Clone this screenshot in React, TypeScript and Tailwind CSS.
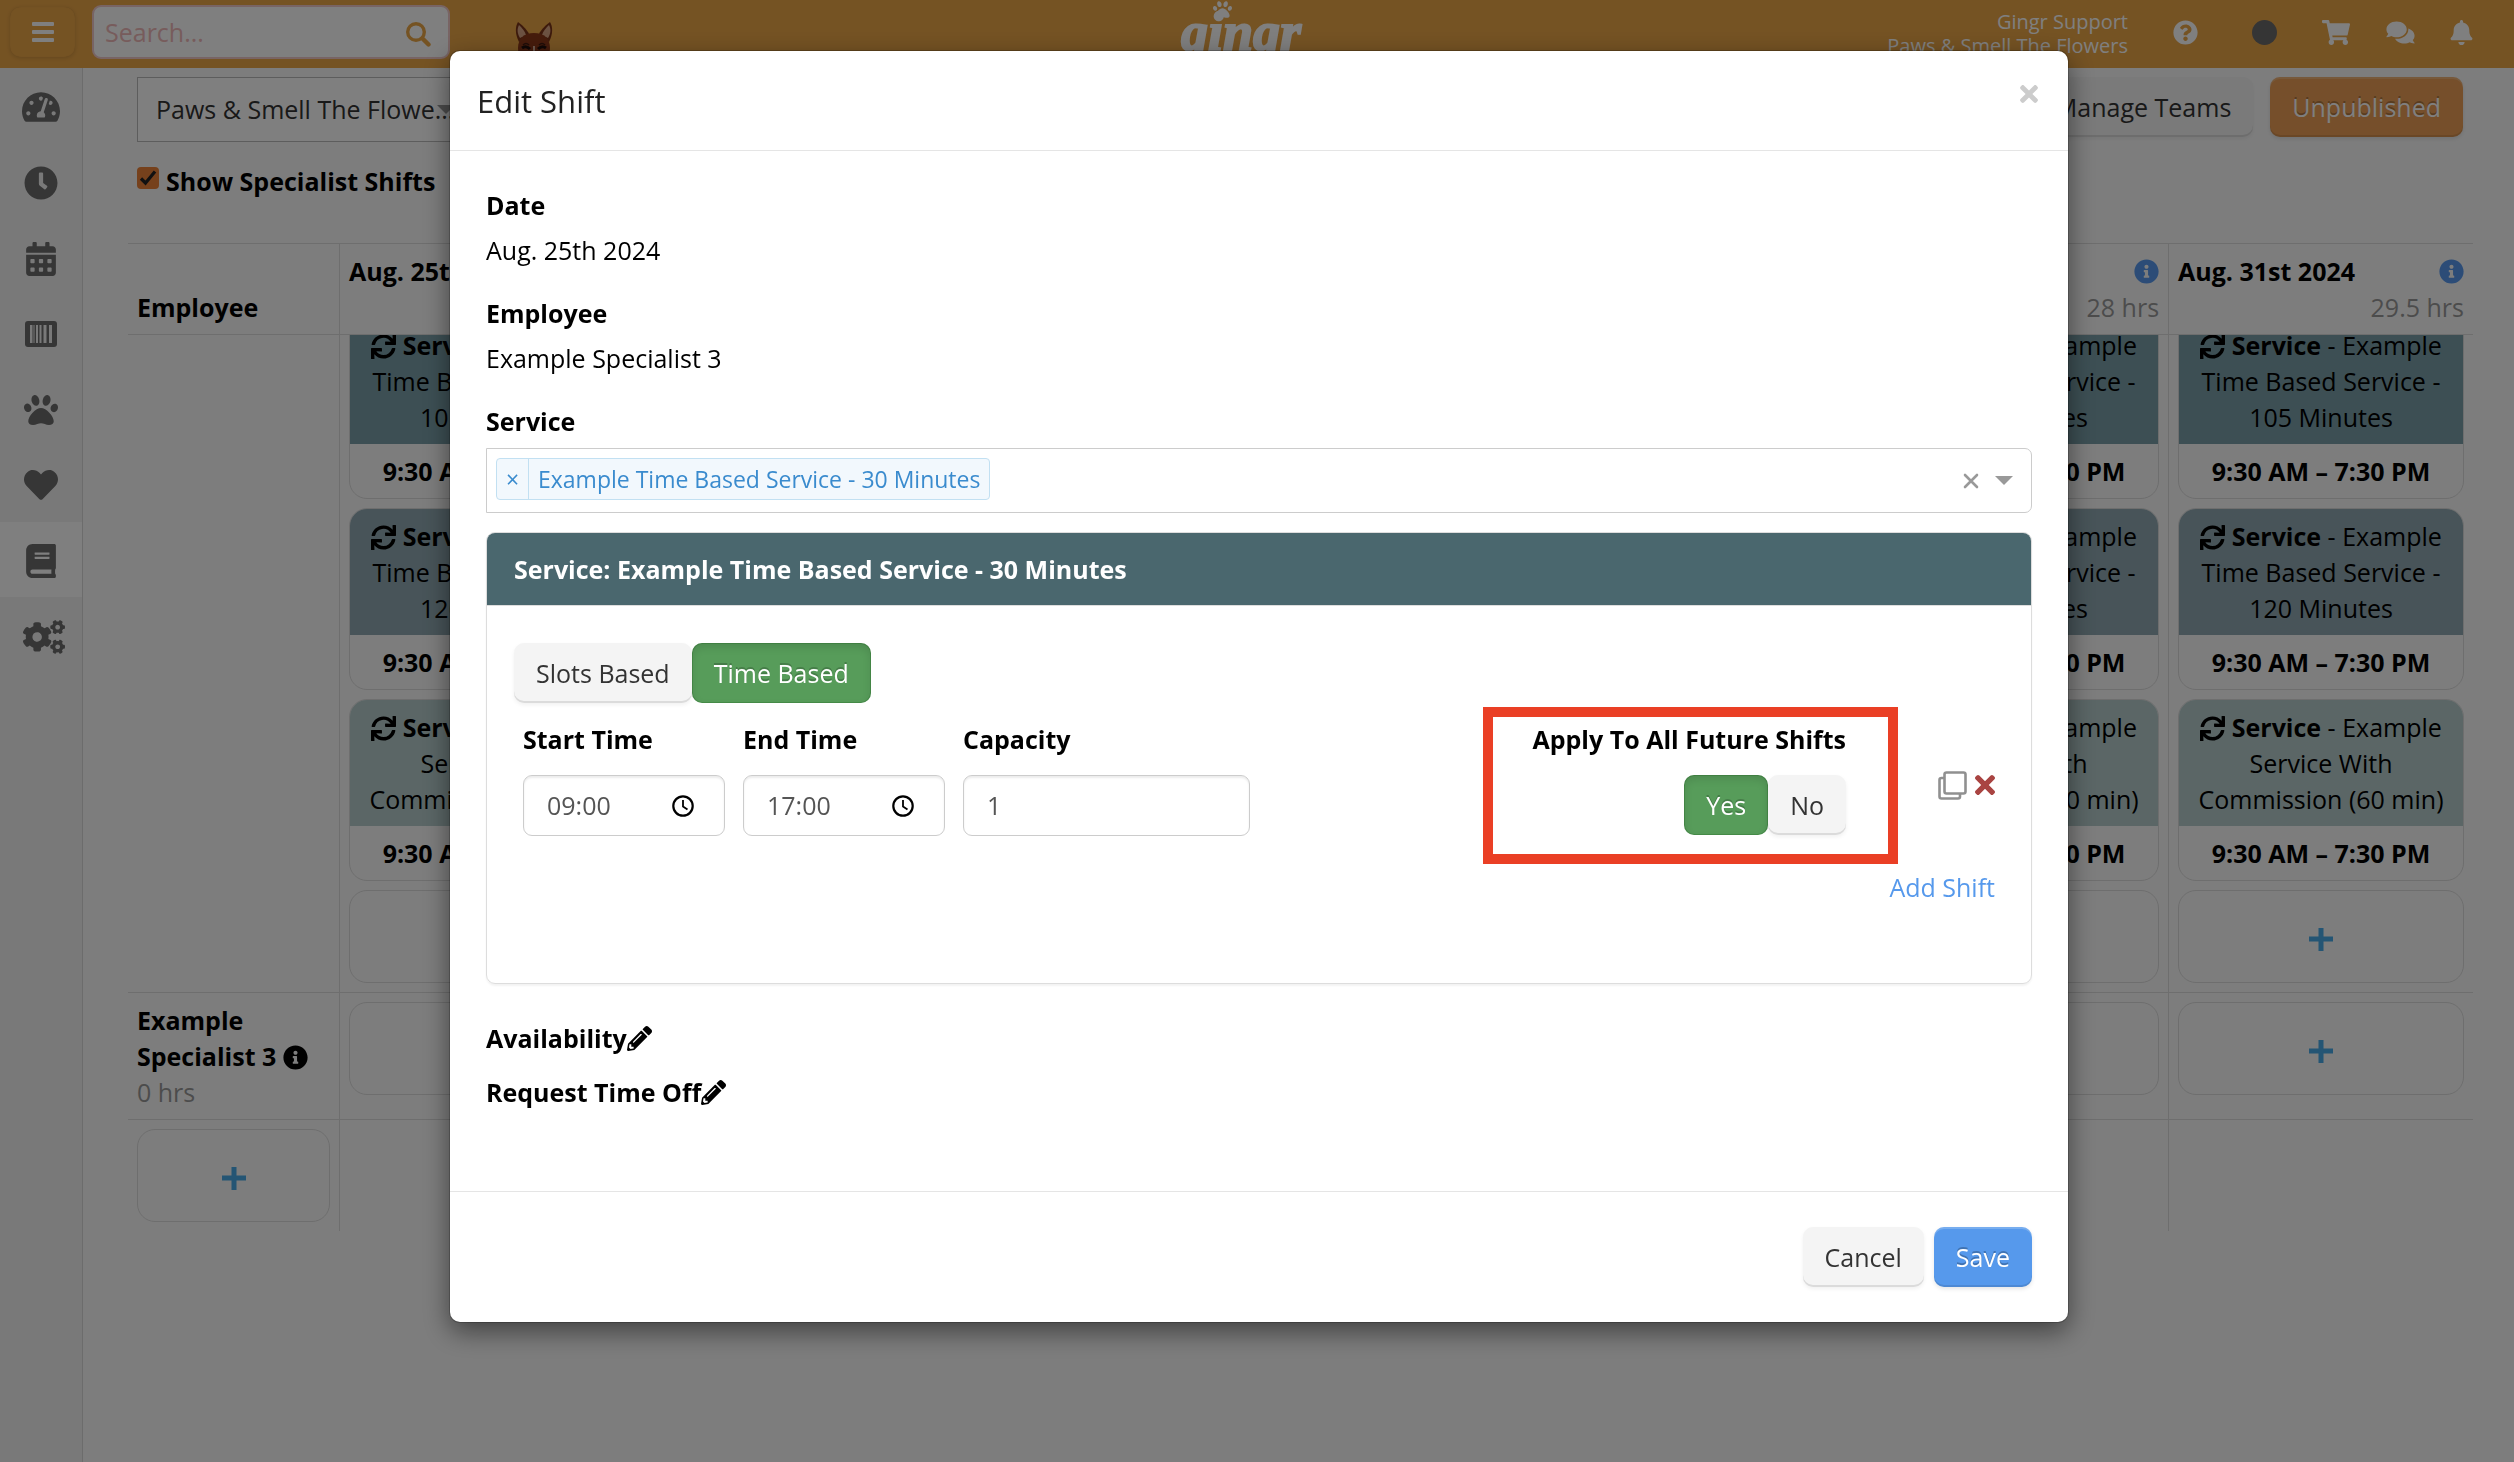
import type { ReactNode } from "react";
import {
	FaBell,
	FaBook,
	FaCalendarAlt,
	FaClock,
	FaCogs,
	FaComments,
	FaHeart,
	FaInfoCircle,
	FaPaw,
	FaPencilAlt,
	FaQuestionCircle,
	FaShoppingCart,
	FaSync,
	FaTachometerAlt,
	FaTimes,
} from "react-icons/fa";

const shifts = [
	{ name: "Example Time Based Service - 105 Minutes", color: "bg-[#7a9fa9]" },
	{ name: "Example Time Based Service - 120 Minutes", color: "bg-[#90a9b2]" },
	{ name: "Example Service With Commission (60 min)", color: "bg-[#b6cdcd]" },
];

const days = [
	{ date: "Aug. 25th 2024", hours: "28 hrs", shifts },
	{ date: "Aug. 26th 2024", hours: "0 hrs", shifts: [] },
	{ date: "Aug. 27th 2024", hours: "0 hrs", shifts: [] },
	{ date: "Aug. 28th 2024", hours: "0 hrs", shifts: [] },
	{ date: "Aug. 29th 2024", hours: "0 hrs", shifts: [] },
	{ date: "Aug. 30th 2024", hours: "28 hrs", shifts },
	{ date: "Aug. 31st 2024", hours: "29.5 hrs", shifts },
];

const BarcodeIcon = () => (
	<svg viewBox="0 0 32 26" className="h-[26px] w-8" fill="currentColor">
		<path
			fillRule="evenodd"
			d="M3 0h26a3 3 0 0 1 3 3v20a3 3 0 0 1-3 3H3a3 3 0 0 1-3-3V3a3 3 0 0 1 3-3Zm2 4v18h2.500V4ZM8.500 4v18h1V4ZM11 4v18h2V4ZM14.500 4v18h2V4ZM18.500 4v18h3V4ZM24 4v18h3V4Z"
		/>
	</svg>
);

const navItems = [
	{ label: "Dashboard", icon: <FaTachometerAlt className="h-[34px] w-[38px]" /> },
	{ label: "Time clock", icon: <FaClock className="size-[34px]" /> },
	{ label: "Calendar", icon: <FaCalendarAlt className="size-[34px]" /> },
	{ label: "Point of sale", icon: <BarcodeIcon /> },
	{ label: "Animals", icon: <FaPaw className="size-[34px]" /> },
	{ label: "Favorites", icon: <FaHeart className="size-[34px]" /> },
	{ label: "Schedule", icon: <FaBook className="size-[34px]" />, active: true },
	{ label: "Settings", icon: <FaCogs className="ml-[6px] h-[34px] w-[42px]" /> },
];

const MenuIcon = () => (
	<svg viewBox="0 0 22 20" className="h-5 w-[22px]" fill="currentColor">
		<rect width="22" height="4" rx="1" />
		<rect y="8" width="22" height="4" rx="1" />
		<rect y="16" width="22" height="4" rx="1" />
	</svg>
);

const SearchIcon = () => (
	<svg
		viewBox="0 0 25 25"
		className="size-[25px]"
		fill="none"
		stroke="currentColor"
	>
		<circle cx="10" cy="10" r="8.300" strokeWidth="3.400" />
		<path d="m16.500 16.500 6 6" strokeWidth="4.400" strokeLinecap="round" />
	</svg>
);

const DogIcon = () => (
	<svg viewBox="0 0 40 44" className="h-11 w-10">
		<path d="M5 20C1 12 1 5 4 0c6 4 10 9 12 14Z" fill="#7a3418" />
		<path d="M35 20c4-8 4-15 1-20-6 4-10 9-12 14Z" fill="#7a3418" />
		<path d="M6 16C3 11 3 7 5 3c3 3 6 6 7 10Z" fill="#d8a584" />
		<path d="M34 16c3-5 3-9 1-13-3 3-6 6-7 10Z" fill="#d8a584" />
		<path d="M20 11c10 0 16 6 16 15 0 10-6 18-16 18S4 36 4 26c0-9 6-15 16-15Z" fill="#8c3818" />
		<path d="M9 23q3-3 6 0M25 23q3-3 6 0" stroke="#3f1a10" strokeWidth="1.500" fill="none" />
		<path d="M8 26q4-3 8 1M24 27q4-4 8-1" stroke="#1f0f0c" strokeWidth="3" fill="none" />
		<path d="M20 24v8" stroke="#f0d8c8" strokeWidth="1.500" />
	</svg>
);

const CloneIcon = () => (
	<svg
		viewBox="0 0 29 29"
		className="size-[29px]"
		fill="none"
		stroke="currentColor"
		strokeWidth="2.600"
		strokeLinejoin="round"
	>
		<rect x="6.500" y="1.500" width="21" height="21" rx="2" />
		<path d="M6.500 7H3.500a2 2 0 0 0-2 2v16.500a2 2 0 0 0 2 2H20a2 2 0 0 0 2-2v-3" />
	</svg>
);

const ClockIcon = () => (
	<svg
		viewBox="0 0 22 22"
		className="size-[22px]"
		fill="none"
		stroke="#000"
		strokeWidth="2.200"
	>
		<circle cx="11" cy="11" r="9.700" />
		<path d="M11 5v6.500l4.500 3" strokeWidth="1.800" />
	</svg>
);

const PlusIcon = () => (
	<svg viewBox="0 0 24 24" className="size-6 text-[#48aae8]" fill="currentColor">
		<path d="M9.500 1h5v8.500H24v5h-9.500V24h-5v-9.500H0v-5h9.500Z" />
	</svg>
);

interface ButtonProps {
	children: ReactNode;
	variant?: "default" | "success" | "primary" | "warning";
	pressed?: boolean;
}

const variants = {
	default:
		"bg-[#f4f4f4] text-[#333] shadow-[inset_0_-2px_0_rgba(0,0,0,.1),0_2px_4px_rgba(0,0,0,.06)]",
	success:
		"bg-[#579c5a] text-white [text-shadow:0_-2px_0_rgba(0,0,0,.2)] shadow-[inset_0_4px_8px_rgba(0,0,0,.12),inset_0_0_0_1px_rgba(0,80,0,.18)]",
	primary:
		"bg-[#5699ec] text-white [text-shadow:0_-2px_0_rgba(0,0,0,.25)] shadow-[inset_0_2px_0_rgba(255,255,255,.2),inset_0_-2px_0_rgba(0,0,0,.1),0_2px_4px_rgba(0,0,0,.1)]",
	warning:
		"bg-[#ec9f56] text-white [text-shadow:0_-2px_0_rgba(0,0,0,.25)] shadow-[inset_0_2px_0_rgba(255,255,255,.2),inset_0_-2px_0_rgba(0,0,0,.1),0_2px_4px_rgba(0,0,0,.1)]",
};

const Button = ({ children, variant = "default", pressed }: ButtonProps) => (
	<button
		type="button"
		aria-pressed={pressed}
		className={`h-[60px] whitespace-nowrap rounded-[10px] px-[22px] ${variants[variant]}`}
	>
		{children}
	</button>
);

const TopBar = () => (
	<header className="flex h-[68px] items-center overflow-hidden bg-[#eba647] text-white">
		<div className="flex h-full flex-1 items-center pb-1">
			<button
				type="button"
				aria-label="Menu"
				className="ml-[10px] flex h-[50px] w-[65px] items-center justify-center rounded-[10px] shadow-[inset_0_0_1px_rgba(0,0,0,.15),0_1px_4px_rgba(0,0,0,.15)]"
			>
				<MenuIcon />
			</button>
			<div className="ml-[17px] flex h-[54px] w-[358px] items-center rounded-[9px] border-2 border-[#f0c8c8] bg-white pl-[11px] pr-[17px]">
				<input
					type="text"
					aria-label="Search"
					placeholder="Search..."
					className="w-full min-w-0 text-[25px] leading-9 outline-none placeholder:text-[#efb8b8]"
				/>
				<button type="button" aria-label="Search" className="mt-1 text-[#eba647]">
					<SearchIcon />
				</button>
			</div>
			<div className="ml-[64px] mt-6">
				<DogIcon />
			</div>
		</div>
		<div className="relative h-full pr-8">
			<FaPaw className="absolute left-8 top-0 size-[19px]" />
			<span className="block font-['Liberation_Serif'] text-[54px] font-bold italic leading-[64px] [-webkit-text-stroke:2px_#fff]">
				gingr
			</span>
		</div>
		<div className="flex h-full flex-1 items-center justify-end">
			<div className="text-right text-[20px] leading-6">
				<div>Gingr Support</div>
				<div>Paws &amp; Smell The Flowers</div>
			</div>
			<div className="flex items-center pb-1 pr-[40px]">
				<FaQuestionCircle className="ml-[45px] size-[25px]" />
				<span className="ml-[54px] size-[25px] rounded-full bg-[#6a6a6a]" />
				<FaShoppingCart className="ml-[45px] h-[25px] w-7" />
				<FaComments className="ml-[36px] h-[25px] w-[29px]" />
				<FaBell className="ml-[34px] size-[25px]" />
			</div>
		</div>
	</header>
);

const Sidebar = () => (
	<nav className="w-[83px] shrink-0 border-r border-[#d8d8d8] bg-[#f3f3f3]">
		<ul className="flex h-[605px] flex-col text-[#6c6c6c]">
			{navItems.map((item) => (
				<li
					key={item.label}
					className={item.active ? "flex-1 bg-white" : "flex-1"}
				>
					<a
						href="#"
						aria-label={item.label}
						className="flex h-full w-[81px] items-center justify-center pt-[3px]"
					>
						{item.icon}
					</a>
				</li>
			))}
		</ul>
	</nav>
);

const AddCell = () => (
	<button
		type="button"
		aria-label="Add shift"
		className="flex h-[93px] w-full items-center justify-center rounded-[18px] border border-[#dcdcdc] pt-1"
	>
		<PlusIcon />
	</button>
);

const ShiftCard = ({ name, color }: { name: string; color: string }) => (
	<div className="overflow-hidden rounded-[18px] border border-[#dcdcdc] text-center">
		<div className={`px-[16px] py-[9px] ${color}`}>
			<FaSync className="mb-1 inline size-[25px]" /> <b>Service</b> - {name}
		</div>
		<div className="whitespace-nowrap py-[9px] font-bold">9:30 AM – 7:30 PM</div>
	</div>
);

const Schedule = () => (
	<table className="w-full table-fixed border-separate border-spacing-0">
		<thead>
			<tr>
				<th className="relative z-10 w-[211px] border-y border-[#dcdcdc] bg-[#fbfbfb] p-[9px] text-left align-bottom">
					Employee
				</th>
				{days.map((day) => (
					<th
						key={day.date}
						className="relative z-10 border-y border-l border-[#dcdcdc] bg-[#fbfbfb] p-[9px] text-left"
					>
						<div className="flex items-center justify-between whitespace-nowrap">
							{day.date}
							<FaInfoCircle className="size-[25px] text-[#5899ee]" />
						</div>
						<div className="text-right font-normal text-[#999]">{day.hours}</div>
					</th>
				))}
			</tr>
		</thead>
		<tbody className="align-top">
			<tr>
				<td className="border-b border-[#dcdcdc]" />
				{days.map((day) => (
					<td key={day.date} className="border-b border-l border-[#dcdcdc] p-[9px]">
						<div className="-mt-[27px] flex flex-col gap-[9px]">
							{day.shifts.map((shift) => (
								<ShiftCard key={shift.name} {...shift} />
							))}
							<AddCell />
						</div>
					</td>
				))}
			</tr>
			<tr>
				<td className="border-b border-[#dcdcdc] p-[9px]">
					<b>
						Example Specialist 3 <FaInfoCircle className="mb-1 inline size-[25px]" />
					</b>
					<div className="text-[#999]">0 hrs</div>
				</td>
				{days.map((day) => (
					<td key={day.date} className="border-b border-l border-[#dcdcdc] p-[9px]">
						<AddCell />
					</td>
				))}
			</tr>
			<tr>
				<td className="p-[9px]">
					<AddCell />
				</td>
				{days.map((day) => (
					<td key={day.date} className="border-l border-[#dcdcdc]" />
				))}
			</tr>
		</tbody>
	</table>
);

const Page = () => (
	<main className="min-w-0 flex-1 pl-[45px] pr-[41px] pt-[9px]">
		<div className="flex items-start justify-between pl-[9px] pr-[10px]">
			<div className="relative">
				<select
					aria-label="Location"
					className="h-[65px] w-[332px] appearance-none border border-[#bbb] bg-white pb-[2px] pl-[18px] text-[#333]"
				>
					<option>Paws &amp; Smell The Flowe...</option>
				</select>
				<span className="pointer-events-none absolute right-[14px] top-7 border-x-[9px] border-t-[9px] border-x-transparent border-t-[#999]" />
			</div>
			<div className="flex gap-[17px]">
				<Button>Manage Teams</Button>
				<Button variant="warning">Unpublished</Button>
			</div>
		</div>
		<label className="mt-[21px] flex w-fit items-start pl-[9px] font-bold">
			<span className="relative mr-[7px] mt-1 size-[22px]">
				<input
					type="checkbox"
					defaultChecked
					className="block size-[22px] appearance-none rounded-[4px] bg-[#ec8238]"
				/>
				<svg
					viewBox="0 0 22 22"
					className="pointer-events-none absolute inset-0"
					fill="none"
					stroke="#222"
					strokeWidth="3.200"
				>
					<path d="m4 11.500 4.500 4.500L18 4.500" />
				</svg>
			</span>
			Show Specialist Shifts
		</label>
		<div className="mt-[44px]">
			<Schedule />
		</div>
	</main>
);

const fieldClass =
	"h-[61px] w-full rounded-[9px] border border-[#ccc] bg-white px-[23px] pb-[2px] text-[#555] shadow-[inset_0_2px_2px_rgba(0,0,0,.075)] outline-none";

const TimeField = ({ id, label, value }: { id: string; label: string; value: string }) => (
	<div className="w-[202px]">
		<label htmlFor={id} className="mb-[18px] block font-bold">
			{label}
		</label>
		<div className="relative">
			<input id={id} type="text" defaultValue={value} className={fieldClass} />
			<span className="pointer-events-none absolute right-[31px] top-5">
				<ClockIcon />
			</span>
		</div>
	</div>
);

const ServicePanel = () => (
	<section className="mt-[19px] overflow-hidden rounded-[9px] border border-[#ddd] shadow-[0_2px_2px_rgba(0,0,0,.05)]">
		<h3 className="border-b border-[#ddd] bg-[#4a676e] px-[27px] py-[18px] font-bold text-white">
			Service: Example Time Based Service - 30 Minutes
		</h3>
		<div className="pb-[78px] pl-[27px] pr-[36px] pt-[37px]">
			<div className="flex">
				<Button>Slots Based</Button>
				<Button variant="success" pressed>
					Time Based
				</Button>
			</div>
			<div className="mt-[18px] flex items-start gap-[18px] pl-[9px]">
				<TimeField id="start" label="Start Time" value="09:00" />
				<TimeField id="end" label="End Time" value="17:00" />
				<div className="w-[287px]">
					<label htmlFor="capacity" className="mb-[18px] block font-bold">
						Capacity
					</label>
					<input id="capacity" type="text" defaultValue="1" className={fieldClass} />
				</div>
				<div className="relative ml-auto flex flex-col items-end">
					<div className="mb-[18px] font-bold">Apply To All Future Shifts</div>
					<div className="flex">
						<Button variant="success" pressed>
							Yes
						</Button>
						<Button>No</Button>
					</div>
					<div className="pointer-events-none absolute -bottom-[29px] -left-[49px] -right-[52px] -top-[14px] border-[10px] border-[#ea3f25]" />
				</div>
				<div className="ml-[74px] mt-[49px] flex items-center gap-2">
					<button type="button" aria-label="Duplicate shift" className="text-[#909090]">
						<CloneIcon />
					</button>
					<button type="button" aria-label="Delete shift" className="text-[#a94442]">
						<FaTimes className="h-[30px] w-5" />
					</button>
				</div>
			</div>
			<div className="mt-[33px] text-right">
				<a href="#" className="text-[#5699ec]">
					Add Shift
				</a>
			</div>
		</div>
	</section>
);

const EditShiftModal = () => (
	<div
		role="dialog"
		aria-label="Edit Shift"
		className="w-full max-w-[1618px] rounded-[10px] bg-white shadow-[0_9px_27px_rgba(0,0,0,.5),0_0_0_1px_rgba(0,0,0,.2)]"
	>
		<div className="flex items-start justify-between border-b border-[#e5e5e5] pb-[27px] pl-[27px] pr-[30px] pt-[28px]">
			<h2 className="text-[31px] leading-[44px] text-[#222]">Edit Shift</h2>
			<button type="button" aria-label="Close" className="mt-[2px] text-[#ccc]">
				<FaTimes className="h-[26px] w-[18px]" />
			</button>
		</div>
		<div className="px-9 pb-[81px] pt-9">
			<div className="font-bold">Date</div>
			<div className="mb-[27px] mt-[9px]">Aug. 25th 2024</div>
			<div className="font-bold">Employee</div>
			<div className="mb-[27px] mt-[9px]">Example Specialist 3</div>
			<div className="font-bold">Service</div>
			<div className="mt-[9px] flex h-[65px] items-center rounded-r-[7px] border border-[#ccc] pl-[9px] pr-[18px]">
				<div className="-mt-1 flex h-[42px] rounded-[4px] border border-[#c2e0f2] bg-[#f2f8fd] text-[23px] leading-10 text-[#3a8bce]">
					<button
						type="button"
						aria-label="Remove service"
						className="w-[32px] border-r border-[#c2e0f2]"
					>
						×
					</button>
					<span className="px-[9px]">Example Time Based Service - 30 Minutes</span>
				</div>
				<button type="button" aria-label="Clear" className="ml-auto mr-4 text-[#999]">
					<svg
						viewBox="0 0 16 16"
						className="size-4"
						fill="none"
						stroke="currentColor"
						strokeWidth="2.600"
						strokeLinecap="round"
					>
						<path d="m2 2 12 12M14 2 2 14" />
					</svg>
				</button>
				<span className="border-x-[9px] border-t-[9px] border-x-transparent border-t-[#999]" />
			</div>
			<ServicePanel />
			<div className="mt-9 flex items-center font-bold">
				Availability
				<button type="button" aria-label="Edit availability">
					<FaPencilAlt className="size-[25px]" />
				</button>
			</div>
			<div className="mt-[18px] flex items-center font-bold">
				Request Time Off
				<button type="button" aria-label="Edit time off">
					<FaPencilAlt className="size-[25px]" />
				</button>
			</div>
		</div>
		<div className="flex justify-end gap-[10px] border-t border-[#e5e5e5] px-9 py-[35px]">
			<Button>Cancel</Button>
			<Button variant="primary">Save</Button>
		</div>
	</div>
);

export default function App() {
	return (
		<div className="flex min-h-screen flex-col bg-[#fbfbfb] font-['Open_Sans','Noto_Sans',sans-serif] text-[25px] leading-9 text-black">
			<TopBar />
			<div className="flex flex-1">
				<Sidebar />
				<Page />
			</div>
			<div className="fixed inset-0 z-20 flex items-start justify-center overflow-hidden bg-black/50 pl-1 pt-[51px]">
				<EditShiftModal />
			</div>
		</div>
	);
}
